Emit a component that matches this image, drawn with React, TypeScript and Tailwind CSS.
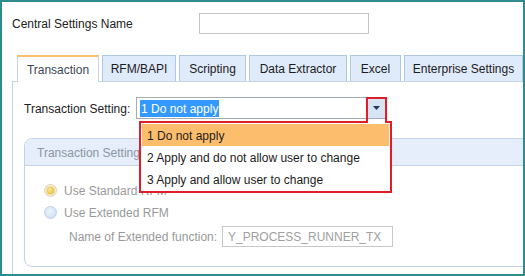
import React from 'react';

const tabs = [
  { label: 'Transaction', width: 'w-[82px]', active: true },
  { label: 'RFM/BAPI', width: 'w-[74px]', active: false },
  { label: 'Scripting', width: 'w-[67px]', active: false },
  { label: 'Data Extractor', width: 'w-[98px]', active: false },
  { label: 'Excel', width: 'w-[51px]', active: false },
  { label: 'Enterprise Settings', width: 'w-[119px]', active: false },
];

const options = [
  '1 Do not apply',
  '2 Apply and do not allow user to change',
  '3 Apply and allow user to change',
];

const Radio = ({ checked }: { checked: boolean }) => (
  <svg width="13" height="13" viewBox="0 0 13 13" className="shrink-0">
    <defs>
      <radialGradient id="gold" cx="0.45" cy="0.4" r="0.6">
        <stop offset="0" stopColor="#fbe9a0" />
        <stop offset="1" stopColor="#e9bf3c" />
      </radialGradient>
      <radialGradient id="blue" cx="0.45" cy="0.4" r="0.6">
        <stop offset="0" stopColor="#eef4fc" />
        <stop offset="1" stopColor="#cfdff4" />
      </radialGradient>
    </defs>
    <circle cx="6.5" cy="6.5" r="6" fill={checked ? '#f3efe0' : 'url(#blue)'} stroke={checked ? '#ddd3b0' : '#bfd0e6'} />
    {checked && <circle cx="6.5" cy="6.5" r="4" fill="url(#gold)" />}
  </svg>
);

export default function App() {
  return (
    <div className="relative w-[525px] h-[276px] bg-white overflow-hidden text-[12px] text-[#222]" style={{ fontFamily: '"Liberation Sans", Arial, sans-serif' }}>
      <div className="w-full h-full border-2 border-[#2e8c8c] overflow-hidden">
        {/* name row */}
        <div className="flex items-center pt-[11px] pl-[10px]">
          <div className="w-[187px] pt-[1px]">Central Settings Name</div>
          <div className="w-[170px] h-[21px] border border-[#c4c4c4] bg-white" />
        </div>

        {/* tabs + panel */}
        <div className="mt-[21px] ml-[10px]">
          <div className="flex gap-[3px] pl-[5px] h-[26px] items-start">
            {tabs.map((t) =>
              t.active ? (
                <div
                  key={t.label}
                  className={`${t.width} shrink-0 h-[27px] relative z-10 bg-white border-x border-[#c6d3e3] border-t-2 border-t-[#f6bf6a] flex items-center justify-center text-[#3b4757]`}
                >
                  {t.label}
                </div>
              ) : (
                <div
                  key={t.label}
                  className={`${t.width} shrink-0 h-[26px] bg-[#dfeafa] border-x border-t border-[#aec7e6] flex items-center justify-center text-[#1c1c1c]`}
                >
                  {t.label}
                </div>
              )
            )}
          </div>

          <div className="border-t border-l border-[#c6d3e3] h-[200px]">
            <div className="flex items-center pt-[15px] pl-[11px]">
              <div className="w-[112px] pt-[1px]">Transaction Setting:</div>
              <div className="w-[250px] h-[22px] border border-[#a3abb5] flex items-center pl-[3px] bg-white">
                <span className="bg-[#3399ff] text-white px-[1px] leading-[16px] pt-[1px]">1 Do not apply</span>
                <div className="ml-auto w-[18px] h-[20px] bg-[#d6e4f6] flex items-center justify-center">
                  <svg width="7" height="4" viewBox="0 0 7 4">
                    <path d="M0 0 H7 L3.5 4 Z" fill="#243a5a" />
                  </svg>
                </div>
              </div>
            </div>

            {/* group box */}
            <div className="mt-[19px] ml-[11px] w-[520px] h-[129px] border border-[#c3d2e6] rounded-[8px] text-[#999]">
              <div className="h-[27px] bg-[#e5eefa] border-b border-[#c3d2e6] rounded-t-[7px] flex items-center pl-[12px] pt-[1px] text-[#8b96a3]">
                Transaction Settings
              </div>
              <div className="pt-[13px] pl-[19px]">
                <div className="flex items-center gap-[7px] h-[22px]">
                  <Radio checked />
                  <span className="pt-[1px]">Use Standard RFM</span>
                </div>
                <div className="flex items-center gap-[7px] h-[22px]">
                  <Radio checked={false} />
                  <span className="pt-[1px]">Use Extended RFM</span>
                </div>
                <div className="flex items-center mt-[3px] pl-[25px]">
                  <div className="w-[153px] pt-[1px]">Name of Extended function:</div>
                  <div className="w-[171px] h-[21px] border border-[#c8c8c8] flex items-center pl-[5px] pt-[1px] text-[#a0a0a0]">
                    Y_PROCESS_RUNNER_TX
                  </div>
                </div>
              </div>
            </div>
          </div>
        </div>
      </div>

      {/* open dropdown list */}
      <div className="absolute left-[141px] top-[123px] w-[249px] h-[68px] bg-white p-[1px] text-[#1c1c1c]">
        {options.map((o, i) => (
          <div key={o} className={`h-[22px] flex items-center pl-[5px] pt-[2px] ${i === 0 ? 'bg-[#fcbd6d]' : ''}`}>
            {o}
          </div>
        ))}
      </div>

      {/* red highlight outline */}
      <svg className="absolute left-0 top-0 pointer-events-none" width="525" height="276">
        <path d="M367 98 H386 V122 H391 V192 H140 V122 H367 Z" fill="none" stroke="#e01e2a" strokeWidth="2" />
      </svg>
    </div>
  );
}
